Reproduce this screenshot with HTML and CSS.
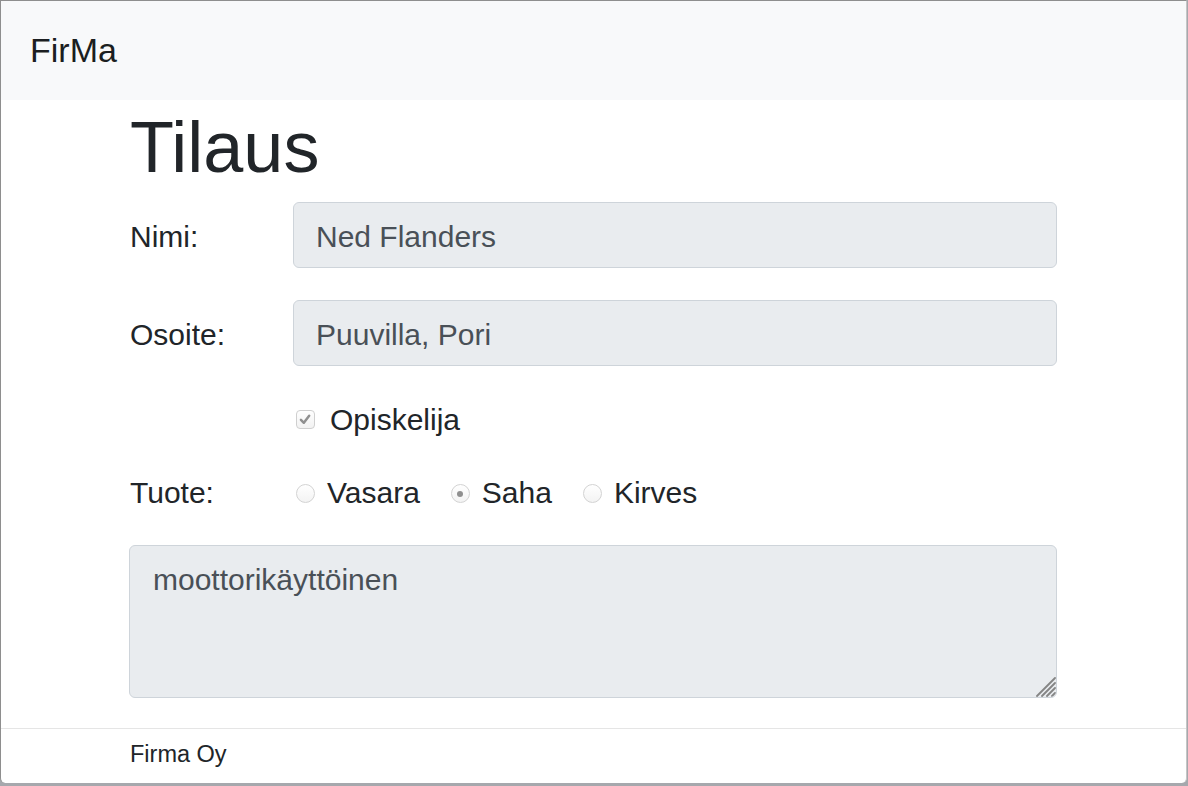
FILE: index.html
```html
<!DOCTYPE html>
<html lang="fi">
<head>
<meta charset="utf-8">
<title>FirMa</title>
<link rel="stylesheet" href="styles.css">
</head>
<body>
<div class="window">
  <nav class="navbar">
    <span class="brand">FirMa</span>
  </nav>
  <main class="container">
    <h1 class="title">Tilaus</h1>
    <div class="row row-input">
      <label class="label">Nimi:</label>
      <input class="field" type="text" value="Ned Flanders" readonly>
    </div>
    <div class="row row-input row-gap">
      <label class="label">Osoite:</label>
      <input class="field" type="text" value="Puuvilla, Pori" readonly>
    </div>
    <div class="row row-check">
      <span></span>
      <div class="choices">
        <span class="checkbox">
          <svg width="19" height="19" viewBox="0 0 19 19"><path d="M5.2 9.8 L8.3 13 L13.9 5.6" fill="none" stroke="#8f8f8f" stroke-width="2.6" stroke-linecap="round" stroke-linejoin="round"/></svg>
        </span>
        <span class="choice-text">Opiskelija</span>
      </div>
    </div>
    <div class="row row-radio">
      <label class="label">Tuote:</label>
      <div class="choices">
        <span class="opt"><span class="radio"></span><span class="choice-text">Vasara</span></span>
        <span class="opt"><span class="radio checked"></span><span class="choice-text">Saha</span></span>
        <span class="opt"><span class="radio"></span><span class="choice-text">Kirves</span></span>
      </div>
    </div>
    <div class="area-wrap">
      <textarea class="area" readonly>moottorikäyttöinen</textarea>
      <span class="grip">
        <svg width="22" height="22" viewBox="0 0 22 22">
          <g stroke="#858585" stroke-width="1.8" stroke-linecap="round">
            <line x1="21" y1="3" x2="3" y2="21"/>
            <line x1="21" y1="8" x2="8" y2="21"/>
            <line x1="21" y1="13" x2="13" y2="21"/>
            <line x1="21" y1="18" x2="18" y2="21"/>
          </g>
        </svg>
      </span>
    </div>
  </main>
  <footer class="footer">
    <div class="footer-inner">Firma Oy</div>
  </footer>
</div>
</body>
</html>
```
FILE: styles.css
```css
html, body {
  margin: 0;
  padding: 0;
}

body {
  width: 1188px;
  height: 786px;
  overflow: hidden;
  background: #a6a8ad;
  font-family: "Liberation Sans", Arial, sans-serif;
  color: #212529;
}

.window {
  box-sizing: border-box;
  width: 1187px;
  height: 783px;
  background: #ffffff;
  border-top: 1px solid #8e8e8e;
  border-left: 1px solid #8e8e8e;
  border-right: 1px solid #c6c6c6;
  border-radius: 0 0 5px 5px;
  display: flex;
  flex-direction: column;
  overflow: hidden;
}

.navbar {
  flex: none;
  height: 99px;
  background: #f8f9fa;
  display: flex;
  align-items: center;
  padding-left: 29px;
}

.brand {
  font-size: 34px;
  color: #1b1e21;
}

.container {
  width: 928px;
  margin: 0 0 0 128px;
}

.title {
  font-size: 72px;
  font-weight: 400;
  line-height: 86px;
  margin: 4px 0 12px 1px;
  color: #212529;
}

.row {
  display: grid;
  grid-template-columns: 164px 1fr;
}

.row-input {
  align-items: center;
  height: 66px;
}

.row-gap {
  margin-top: 32px;
}

.label {
  font-size: 30px;
  line-height: 36px;
  margin-top: 3px;
  padding-left: 1px;
}

.field {
  box-sizing: border-box;
  width: 100%;
  height: 66px;
  background: #e9ecef;
  border: 1px solid #ced4da;
  border-radius: 6px;
  padding: 3px 22px 0;
  font-family: "Liberation Sans", Arial, sans-serif;
  font-size: 30px;
  color: #495057;
  outline: none;
  margin: 0;
}

.row-check {
  margin-top: 36px;
  height: 36px;
}

.row-radio {
  margin-top: 37px;
  height: 36px;
}

.row-radio .label {
  margin-top: 0;
}

.choices {
  display: flex;
  align-items: flex-start;
  padding-left: 3px;
}

.choice-text {
  font-size: 30px;
  line-height: 36px;
}

.checkbox {
  box-sizing: border-box;
  width: 19px;
  height: 19px;
  margin-top: 8px;
  margin-right: 15px;
  border: 1px solid #cfcfcf;
  border-radius: 4px;
  background: linear-gradient(#fefefe, #f2f2f2);
  display: flex;
}

.checkbox svg {
  display: block;
  margin: -1px 0 0 -1px;
}

.opt {
  display: flex;
  align-items: flex-start;
  margin-right: 31px;
}

.radio {
  box-sizing: border-box;
  width: 19px;
  height: 19px;
  margin-top: 9px;
  margin-right: 12px;
  border: 1px solid #d3d3d3;
  border-radius: 50%;
  background: linear-gradient(#ffffff, #f3f3f3);
  display: flex;
  align-items: center;
  justify-content: center;
}

.radio.checked::after {
  content: "";
  width: 6px;
  height: 6px;
  border-radius: 50%;
  background: #8f8f8f;
}

.area-wrap {
  position: relative;
  margin-top: 34px;
}

.area {
  display: block;
  box-sizing: border-box;
  width: 100%;
  height: 153px;
  margin: 0;
  background: #e9ecef;
  border: 1px solid #ced4da;
  border-radius: 6px;
  padding: 11px 22px 11px 23px;
  font-family: "Liberation Sans", Arial, sans-serif;
  font-size: 30px;
  line-height: 45px;
  color: #495057;
  outline: none;
  resize: none;
}

.grip {
  position: absolute;
  right: 1px;
  bottom: 1px;
  width: 22px;
  height: 22px;
  overflow: hidden;
  border-bottom-right-radius: 5px;
}

.grip svg {
  display: block;
}

.footer {
  margin-top: 30px;
  border-top: 1px solid #e5e5e5;
  padding-top: 11px;
}

.footer-inner {
  width: 928px;
  margin: 0 0 0 129px;
  font-size: 23.5px;
  line-height: 28px;
  color: #212529;
}
```
